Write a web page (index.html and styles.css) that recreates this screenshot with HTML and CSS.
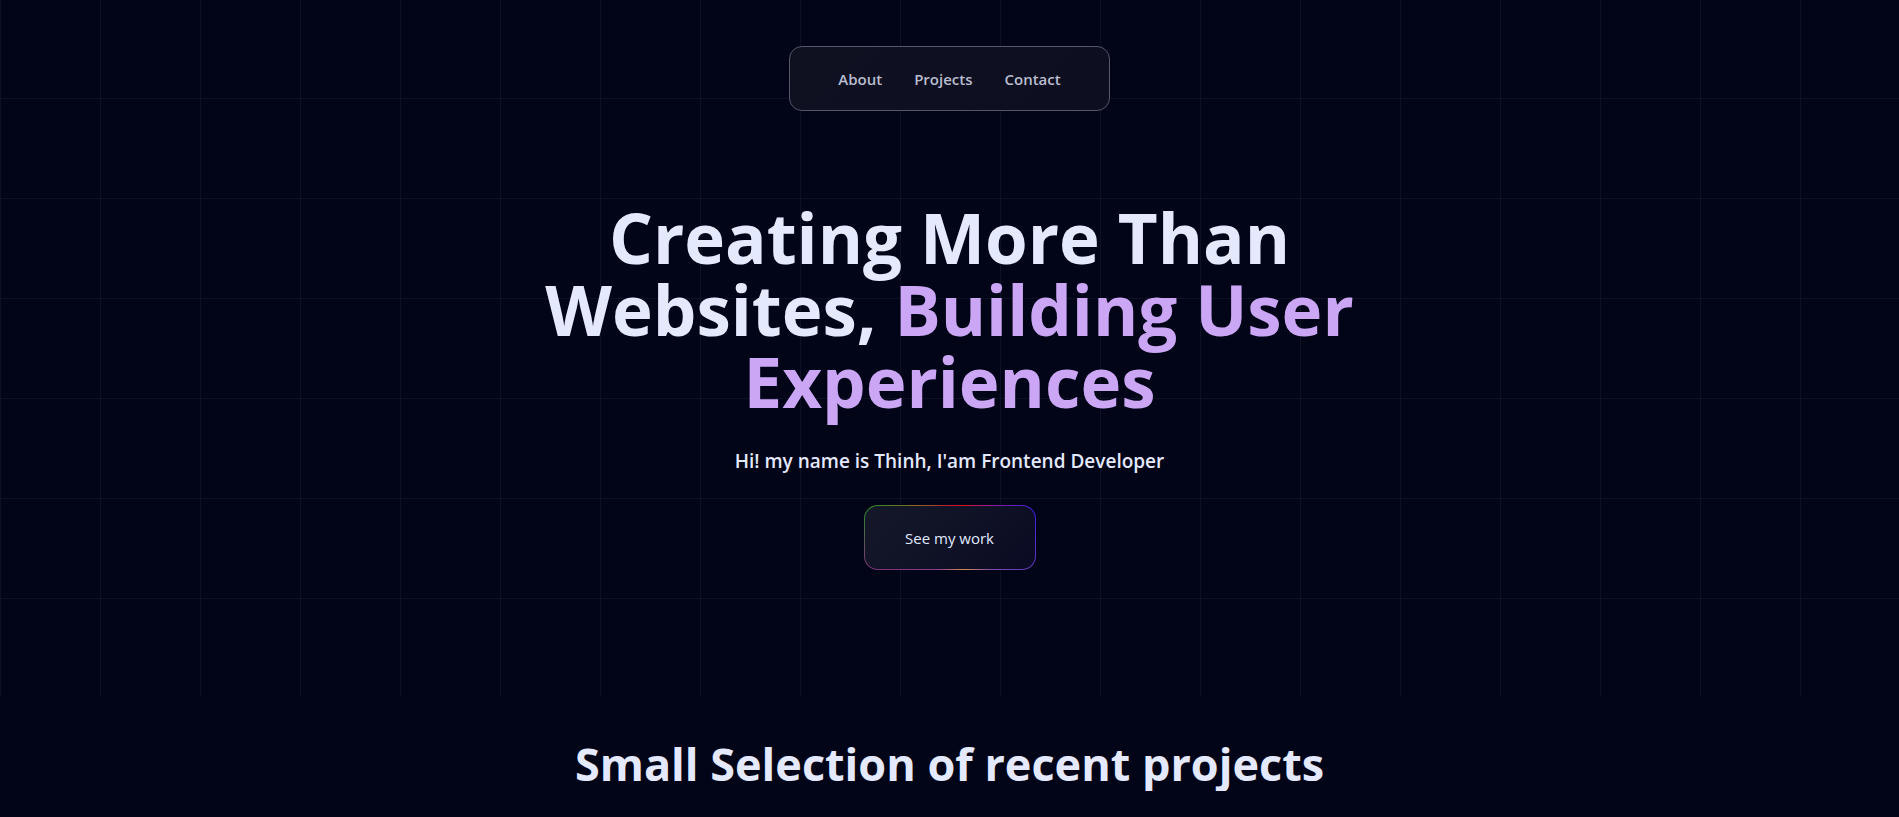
FILE: index.html
```html
<!DOCTYPE html>
<html lang="en">
<head>
<meta charset="utf-8">
<title>Thinh - Frontend Developer</title>
<link rel="stylesheet" href="styles.css">
</head>
<body>
<section class="hero">
  <header class="nav-wrap">
    <nav class="nav">
      <a href="#about" class="nav-link">About</a>
      <a href="#projects" class="nav-link">Projects</a>
      <a href="#contact" class="nav-link">Contact</a>
    </nav>
  </header>
  <h1 class="title">Creating More Than<br>Websites, <span class="accent">Building User<br>Experiences</span></h1>
  <p class="subtitle">Hi! my name is Thinh, I'am Frontend Developer</p>
  <a href="#projects" class="cta">See my work</a>
</section>
<section class="projects" id="projects">
  <h2 class="section-title">Small Selection of recent projects</h2>
</section>
</body>
</html>
```

FILE: styles.css
```css
html, body {
  margin: 0;
  padding: 0;
}
body {
  background: #020417;
  font-family: "Open Sans", "Noto Sans", sans-serif;
  color: #e4e9fd;
  overflow: hidden;
}
.hero {
  height: 697px;
  display: flex;
  flex-direction: column;
  align-items: center;
  background-color: #020417;
  background-image:
    linear-gradient(to right, #0e1025 1px, transparent 1px),
    linear-gradient(to bottom, #0e1025 1px, transparent 1px);
  background-size: 100px 100px;
  background-position: 0 -2px;
}
.nav-wrap {
  padding-top: 46px;
  display: flex;
  justify-content: center;
}
.nav {
  height: 63px;
  display: flex;
  align-items: center;
  gap: 32px;
  padding: 0 48px;
  border: 1px solid #55566a;
  border-radius: 13px;
  background: linear-gradient(135deg, #0f1020, #0d0e20);
}
.nav-link {
  color: #b9bdcf;
  text-decoration: none;
  font-size: 15px;
  font-weight: 600;
}
.title {
  margin: 90px 0 0;
  font-size: 69px;
  line-height: 72px;
  font-weight: 700;
  text-align: center;
  color: #e4e9fd;
}
.accent {
  color: #cba6f5;
}
.subtitle {
  margin: 30px 0 0;
  font-size: 19px;
  line-height: 28px;
  font-weight: 600;
  color: #e4e9fd;
}
.cta {
  margin-top: 30px;
  width: 170px;
  height: 63px;
  display: flex;
  align-items: center;
  justify-content: center;
  border: 1px solid transparent;
  border-radius: 14px;
  background:
    linear-gradient(135deg, #151829, #0a0b23) padding-box,
    conic-gradient(from 0deg, #c81030 0deg, #e01020 25deg, #a01890 50deg, #3a20e0 72deg, #5a30c8 100deg, #7a48b0 125deg, #d09050 155deg, #8a4090 200deg, #80307a 250deg, #2a8a2a 290deg, #8a6a20 310deg, #c81030 360deg) border-box;
  color: #e0eaff;
  font-size: 15px;
  text-decoration: none;
}
.projects {
  padding-top: 40px;
  display: flex;
  justify-content: center;
}
.section-title {
  margin: 0;
  font-size: 45px;
  line-height: 54px;
  font-weight: 700;
  color: #e4e9fd;
}
```
